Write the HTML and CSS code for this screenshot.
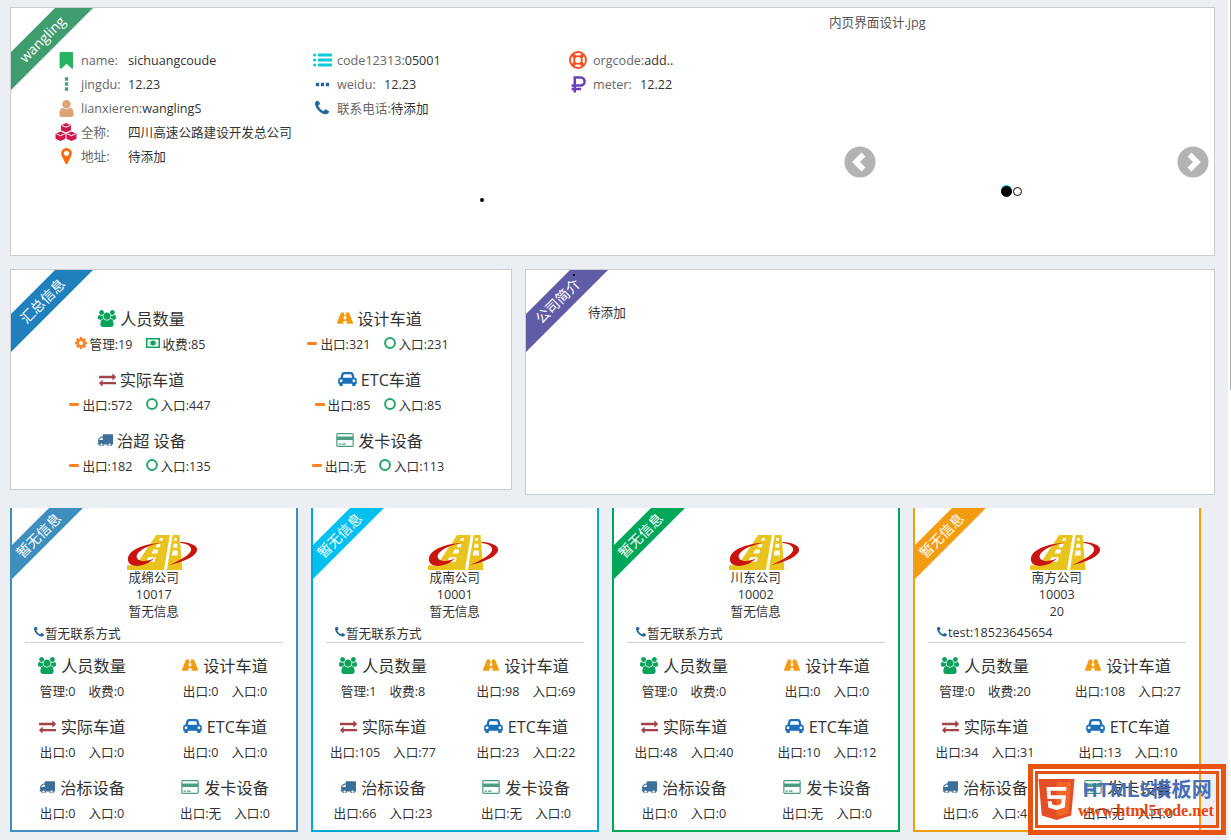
FILE: index.html
```html
<!DOCTYPE html>
<html lang="zh">
<head>
<meta charset="utf-8">
<title>内页</title>
<link rel="stylesheet" href="styles.css">
</head>
<body>
<svg class="sprite" xmlns="http://www.w3.org/2000/svg">
<symbol id="i-bookmark" viewBox="200 128 1280 1536"><path d="M1420 128q23 0 44 9 33 13 52.500 41t19.500 62v1289q0 34-19.500 62t-52.500 41q-19 8-44 8-48 0-83-32l-441-424-441 424q-36 33-83 33-23 0-44-9-33-13-52.500-41t-19.500-62v-1289q0-34 19.500-62t52.500-41q21-9 44-9h1048z"/></symbol>
<symbol id="i-users" viewBox="0 0 1920 1792"><path d="M593 896q-162 5-265 128h-134q-82 0-138-40.500t-56-118.500q0-353 124-353 6 0 43.500 21t97.500 42.500 119 21.500q67 0 133-23-5 37-5 66 0 139 81 256zm1071 637q0 120-73 189.500t-194 69.500h-874q-121 0-194-69.500t-73-189.500q0-53 3.500-103.500t14-109 26.500-108.500 43-97.500 62-81 85.500-53.500 111.500-20q10 0 43 21.500t73 48 107 48 135 21.500 135-21.500 107-48 73-48 43-21.500q61 0 111.500 20t85.500 53.500 62 81 43 97.500 26.500 108.500 14 109 3.500 103.500zm-1024-1277q0 106-75 181t-181 75-181-75-75-181 75-181 181-75 181 75 75 181zm704 384q0 159-112.500 271.500t-271.500 112.500-271.500-112.500-112.500-271.500 112.500-271.500 271.500-112.500 271.500 112.500 112.500 271.500zm576 225q0 78-56 118.500t-138 40.500h-134q-103-123-265-128 81-117 81-256 0-29-5-66 66 23 133 23 59 0 119-21.500t97.500-42.500 43.500-21q124 0 124 353zm-128-609q0 106-75 181t-181 75-181-75-75-181 75-181 181-75 181 75 75 181z"/></symbol>
<symbol id="i-user" viewBox="256 128 1280 1536"><path d="M1536 1399q0 109-62.500 187t-150.500 78h-854q-88 0-150.500-78t-62.500-187q0-85 8.500-160.500t31.500-152 58.500-131 94-89 134.500-34.500q131 128 313 128t313-128q76 0 134.500 34.500t94 89 58.500 131 31.500 152 8.500 160.500zm-256-887q0 159-112.500 271.500t-271.500 112.500-271.500-112.500-112.500-271.500 112.500-271.500 271.500-112.500 271.500 112.500 112.500 271.500z"/></symbol>
<symbol id="i-marker" viewBox="384 128 1024 1536"><path d="M1152 640q0-106-75-181t-181-75-181 75-75 181 75 181 181 75 181-75 75-181zm256 0q0 109-33 179l-364 774q-16 33-47.500 52t-67.500 19-67.500-19-46.500-52l-365-774q-33-70-33-179 0-212 150-362t362-150 362 150 150 362z"/></symbol>
<symbol id="i-phone" viewBox="192 192 1408 1408"><path d="M1600 1240q0 27-10 70.500t-21 68.500q-21 50-122 106-94 51-186 51-27 0-53-3.500t-57.500-12.500-47-14.500-55.500-20.500-49-18q-98-35-175-83-127-79-264-216t-216-264q-48-77-83-175-3-9-18-49t-20.500-55.500-14.500-47-12.500-57.500-3.500-53q0-92 51-186 56-101 106-122 25-11 68.500-21t70.500-10q14 0 21 3 18 6 53 76 11 19 30 54t35 63.500 31 53.500q3 4 17.500 25t21.500 35.500 7 28.500q0 20-28.500 50t-62 55-62 53-28.500 46q0 9 5 22.500t8.500 20.500 14 24 11.500 19q76 137 174 235t235 174q2 1 19 11.500t24 14 20.500 8.500 22.500 5q18 0 46-28.500t53-62 55-62 50-28.500q14 0 28.500 7t35.500 21.500 25 17.500q25 15 53.500 31t63.500 35 54 30q70 35 76 53 3 7 3 21z"/></symbol>
<symbol id="i-road" viewBox="50 248 1820 1296"><path d="M1111 1004v-4l-24-320q-1-13-11-22.500t-23-9.500h-186q-13 0-23 9.500t-11 22.500l-24 320v4q-1 12 8 20t21 8h244q12 0 21-8t8-20zm759 467q0 73-46 73h-704q13 0 22-9.500t8-22.500l-20-256q-1-13-11-22.500t-23-9.500h-272q-13 0-23 9.500t-11 22.500l-20 256q-1 13 8 22.500t22 9.500h-704q-46 0-46-73 0-54 26-116l417-1044q8-19 26-33t38-14h339q-13 0-23 9.500t-11 22.500l-15 192q-1 14 8 23t22 9h166q13 0 22-9t8-23l-15-192q-1-13-11-22.500t-23-9.500h339q20 0 38 14t26 33l417 1044q26 62 26 116z"/></symbol>
<symbol id="i-exchange" viewBox="0 256 1792 1280"><path d="M1792 1184v192q0 13-9.500 22.500t-22.500 9.500h-1376v192q0 13-9.500 22.500t-22.500 9.500q-12 0-24-10l-319-320q-9-9-9-22 0-14 9-23l320-320q9-9 23-9 13 0 22.500 9.500t9.500 22.500v192h1376q13 0 22.500 9.500t9.500 22.500zm0-544q0 14-9 23l-320 320q-9 9-23 9-13 0-22.500-9.500t-9.500-22.500v-192h-1376q-13 0-22.500-9.500t-9.500-22.500v-192q0-13 9.500-22.500t22.500-9.500h1376v-192q0-14 9-23t23-9q12 0 24 10l319 319q9 9 9 23z"/></symbol>
<symbol id="i-car" viewBox="0 128 2048 1536"><path d="M480 1088q0-66-47-113t-113-47-113 47-47 113 47 113 113 47 113-47 47-113zm36-320h1016l-89-357q-2-8-14-17.500t-21-9.500h-768q-9 0-21 9.500t-14 17.500zm1372 320q0-66-47-113t-113-47-113 47-47 113 47 113 113 47 113-47 47-113zm160-96v384q0 14-9 23t-23 9h-96v128q0 80-56 136t-136 56-136-56-56-136v-128h-1024v128q0 80-56 136t-136 56-136-56-56-136v-128h-96q-14 0-23-9t-9-23v-384q0-93 65.500-158.500t158.500-65.500h28l105-419q23-94 104-157.500t179-63.500h768q98 0 179 63.500t104 157.500l105 419h28q93 0 158.500 65.500t65.500 158.500z"/></symbol>
<symbol id="i-truck" viewBox="0 256 1792 1280"><path d="M640 1408q0-52-38-90t-90-38-90 38-38 90 38 90 90 38 90-38 38-90zm-384-512h384v-256h-158q-13 0-22 9l-195 195q-9 9-9 22v30zm1280 512q0-52-38-90t-90-38-90 38-38 90 38 90 90 38 90-38 38-90zm256-1088v1024q0 15-4 26.500t-13.500 18.500-16.500 11.500-23.500 6-22.500 2-25.500 0-22.500-.5q0 106-75 181t-181 75-181-75-75-181h-384q0 106-75 181t-181 75-181-75-75-181h-64q-3 0-22.500.5t-25.500 0-22.500-2-23.500-6-16.500-11.500-13.500-18.500-4-26.500q0-26 19-45t45-19v-320q0-8-.5-35t0-38 2.500-34.500 6.500-37 14-30.500 22.500-30l198-198q19-19 50.500-32t58.500-13h160v-192q0-26 19-45t45-19h1024q26 0 45 19t19 45z"/></symbol>
<symbol id="i-card" viewBox="0 128 1920 1536"><path d="M1760 128q66 0 113 47t47 113v1216q0 66-47 113t-113 47h-1600q-66 0-113-47t-47-113v-1216q0-66 47-113t113-47h1600zm-1600 128q-13 0-22.500 9.500t-9.500 22.500v224h1664v-224q0-13-9.500-22.500t-22.500-9.500h-1600zm1600 1280q13 0 22.500-9.500t9.500-22.500v-608h-1664v608q0 13 9.500 22.500t22.500 9.500h1600zm-1504-128v-128h256v128h-256zm384 0v-128h384v128h-384z"/></symbol>
<symbol id="i-cog" viewBox="128 128 1536 1536"><path d="M1152 896q0-106-75-181t-181-75-181 75-75 181 75 181 181 75 181-75 75-181zm512-109v222q0 12-8 23t-20 13l-185 28q-19 54-39 91 35 50 107 138 10 12 10 25t-9 23q-27 37-99 108t-94 71q-12 0-26-9l-138-108q-44 23-91 38-16 136-29 186-7 28-36 28h-222q-14 0-24.500-8.500t-11.500-21.500l-28-184q-49-16-90-37l-141 107q-10 9-25 9-14 0-25-11-126-114-165-168-7-10-7-23 0-12 8-23 15-21 51-66.500t54-70.500q-27-50-41-99l-183-27q-13-2-21-12.500t-8-23.500v-222q0-12 8-23t19-13l186-28q14-46 39-92-40-57-107-138-10-12-10-24 0-10 9-23 26-36 98.500-107.500t94.500-71.500q13 0 26 10l138 107q44-23 91-38 16-136 29-186 7-28 36-28h222q14 0 24.500 8.500t11.500 21.500l28 184q49 16 90 37l142-107q9-9 24-9 13 0 25 10 129 119 165 170 7 8 7 22 0 12-8 23-15 21-51 66.500t-54 70.500q26 50 41 98l183 28q13 2 21 12.500t8 23.500z"/></symbol>
<symbol id="i-vdots" viewBox="0 0 6 16"><path d="M1 0h4v4H1zM1 6h4v4H1zM1 12h4v4H1z"/></symbol>
<symbol id="i-hdots" viewBox="0 0 16 6"><path d="M0 1h4v4H0zM6 1h4v4H6zM12 1h4v4h-4z"/></symbol>
<symbol id="i-list" viewBox="0 0 19 14"><circle cx="1.600" cy="2" r="1.600"/><circle cx="1.600" cy="7" r="1.600"/><circle cx="1.600" cy="12" r="1.600"/><path d="M5 .6h14v2.800H5zM5 5.600h14v2.800H5zM5 10.600h14v2.800H5z"/></symbol>
<symbol id="i-ring" viewBox="0 0 18 18"><g fill="none" stroke="currentColor"><circle cx="9" cy="9" r="8" stroke-width="1.900"/><circle cx="9" cy="9" r="3.900" stroke-width="1.900"/><path d="M3.400 3.400l3 3M14.600 3.400l-3 3M14.600 14.600l-3-3M3.400 14.600l3-3" stroke-width="3.400"/></g></symbol>
<symbol id="i-ruble" viewBox="0 0 14 16"><path d="M3.500 15.500V1.500H9a3.500 3.500 0 0 1 0 7.500H.5M.5 12.300h9" fill="none" stroke="currentColor" stroke-width="2.400"/></symbol>
<symbol id="i-cubes" viewBox="0 0 22 18"><path d="M11 0l5 2.200v5L11 9.400 6 7.200v-5zM5.500 8.500l5 2.200v5l-5 2.300-5-2.300v-5zM16.500 8.500l5 2.200v5l-5 2.300-5-2.300v-5z"/><path d="M6.800 2.400 11 4.200l4.200-1.800M1.300 10.900l4.200 1.800 4.200-1.800M12.300 10.900l4.200 1.800 4.200-1.800" fill="none" stroke="#fff" stroke-width="1"/></symbol>
<symbol id="i-money" viewBox="0 0 14 10"><path fill-rule="evenodd" d="M0 0h14v10H0zM1.500 1.500v7h11v-7z"/><circle cx="7" cy="5" r="2.500"/><rect x="3" y="3" width="8" height="4" opacity=".25"/></symbol>
<symbol id="i-minus" viewBox="0 0 10 3"><rect width="10" height="3" rx="1.200"/></symbol>
<symbol id="i-circle" viewBox="0 0 12 12"><circle cx="6" cy="6" r="4.900" fill="none" stroke="currentColor" stroke-width="2"/></symbol>
<symbol id="i-logo" viewBox="0 0 72 36"><path fill="#e9c31e" d="M30 0h14l-6 36H6zM47 0h7l3 36H41zM0 31h12l-4 5H0z"/><path fill="#fff" d="M34 3h3l-.5 3h-3.400zM31 9h3.500l-.7 3.500h-4.300zM27 15h5l-.8 4h-6zM22 23h7.500l-1 4.500h-9zM48.800 3h2.400l.2 3h-3zM48 9h3.600l.3 4h-4.500zM47 16h5l.3 5h-6.200z"/><path fill="#c9140f" d="M36 8C16 9 0 16 1 26c1 8 17 8 27-2-8 4-17 4-18-1-1-6 12-13 26-15zM55 7c11 1 18 4 17 9-1 6-14 12-29 15 12-5 23-11 23-16 0-4-5-6-11-7z"/></symbol>
</svg>

<main class="page">
  <section class="panel panel-main">
    <div class="ribbon rb-green"><span>wangling</span></div>
    <div class="info">
      <ul class="info-col">
        <li><span class="info-ico"><svg class="ic-bookmark c-bookmark"><use href="#i-bookmark"/></svg></span><span class="lbl lbl-w">name:</span><span>sichuangcoude</span></li>
        <li><span class="info-ico"><svg class="ic-vdots c-teal"><use href="#i-vdots"/></svg></span><span class="lbl lbl-w">jingdu:</span><span>12.23</span></li>
        <li><span class="info-ico"><svg class="ic-user c-tan"><use href="#i-user"/></svg></span><span class="lbl">lianxieren:</span><span>wanglingS</span></li>
        <li><span class="info-ico"><svg class="ic-cubes c-crimson"><use href="#i-cubes"/></svg></span><span class="lbl lbl-w">全称:</span><span>四川高速公路建设开发总公司</span></li>
        <li><span class="info-ico"><svg class="ic-marker c-orange"><use href="#i-marker"/></svg></span><span class="lbl lbl-w">地址:</span><span>待添加</span></li>
      </ul>
      <ul class="info-col">
        <li><span class="info-ico"><svg class="ic-list c-cyan"><use href="#i-list"/></svg></span><span class="lbl">code12313:</span><span>05001</span></li>
        <li><span class="info-ico"><svg class="ic-hdots c-blue"><use href="#i-hdots"/></svg></span><span class="lbl lbl-w">weidu:</span><span>12.23</span></li>
        <li><span class="info-ico"><svg class="ic-phone c-blue"><use href="#i-phone"/></svg></span><span class="lbl">联系电话:</span><span>待添加</span></li>
      </ul>
      <ul class="info-col">
        <li><span class="info-ico"><svg class="ic-ring c-ring"><use href="#i-ring"/></svg></span><span class="lbl">orgcode:</span><span>add..</span></li>
        <li><span class="info-ico"><svg class="ic-ruble c-purple"><use href="#i-ruble"/></svg></span><span class="lbl lbl-w">meter:</span><span>12.22</span></li>
      </ul>
    </div>
    <div class="stray-dot"></div>
    <div class="carousel">
      <div class="carousel-title">内页界面设计.jpg</div>
      <div class="arrow arrow-prev"><svg viewBox="0 0 32 32"><circle cx="16" cy="16" r="15.500"/><path d="M19.500 8.500 12 16l7.500 7.500" class="chev"/></svg></div>
      <div class="arrow arrow-next"><svg viewBox="0 0 32 32"><circle cx="16" cy="16" r="15.500"/><path d="M12.500 8.500 20 16l-7.500 7.500" class="chev"/></svg></div>
      <div class="dots"><i class="dot dot-on"></i><i class="dot"></i></div>
    </div>
  </section>

  <div class="middle">
    <section class="panel panel-sum">
      <div class="ribbon rb-blue"><span>汇总信息</span></div>
      <div class="stats stats-sum">
        <div class="stat"><div class="stat-title"><svg class="ic-users c-users"><use href="#i-users"/></svg>人员数量</div><div class="stat-sub"><span class="sv"><svg class="ic-cog c-amber"><use href="#i-cog"/></svg>管理:19</span><span class="sv"><svg class="ic-money c-users"><use href="#i-money"/></svg>收费:85</span></div></div>
        <div class="stat"><div class="stat-title"><svg class="ic-road c-road"><use href="#i-road"/></svg>设计车道</div><div class="stat-sub"><span class="sv"><svg class="ic-minus c-amber"><use href="#i-minus"/></svg>出口:321</span><span class="sv"><svg class="ic-circle c-ok"><use href="#i-circle"/></svg>入口:231</span></div></div>
        <div class="stat"><div class="stat-title"><svg class="ic-exchange c-red"><use href="#i-exchange"/></svg>实际车道</div><div class="stat-sub"><span class="sv"><svg class="ic-minus c-amber"><use href="#i-minus"/></svg>出口:572</span><span class="sv"><svg class="ic-circle c-ok"><use href="#i-circle"/></svg>入口:447</span></div></div>
        <div class="stat"><div class="stat-title"><svg class="ic-car c-car"><use href="#i-car"/></svg>ETC车道</div><div class="stat-sub"><span class="sv"><svg class="ic-minus c-amber"><use href="#i-minus"/></svg>出口:85</span><span class="sv"><svg class="ic-circle c-ok"><use href="#i-circle"/></svg>入口:85</span></div></div>
        <div class="stat"><div class="stat-title"><svg class="ic-truck c-truck"><use href="#i-truck"/></svg>治超 设备</div><div class="stat-sub"><span class="sv"><svg class="ic-minus c-amber"><use href="#i-minus"/></svg>出口:182</span><span class="sv"><svg class="ic-circle c-ok"><use href="#i-circle"/></svg>入口:135</span></div></div>
        <div class="stat"><div class="stat-title"><svg class="ic-card c-teal"><use href="#i-card"/></svg>发卡设备</div><div class="stat-sub"><span class="sv"><svg class="ic-minus c-amber"><use href="#i-minus"/></svg>出口:无</span><span class="sv"><svg class="ic-circle c-ok"><use href="#i-circle"/></svg>入口:113</span></div></div>
      </div>
    </section>
    <section class="panel panel-intro">
      <div class="ribbon rb-purple"><span>公司简介</span></div>
      <div class="intro-dot"></div>
      <p class="intro-text">待添加</p>
    </section>
  </div>

  <div class="cards">
    <article class="card card-1">
      <div class="ribbon-sm rb-c1"><span>暂无信息</span></div>
      <svg class="logo"><use href="#i-logo"/></svg>
      <div class="org"><div>成绵公司</div><div>10017</div><div>暂无信息</div></div>
      <div class="contact"><svg class="ic-phone-sm c-blue"><use href="#i-phone"/></svg>暂无联系方式</div>
      <div class="stats stats-card">
        <div class="stat"><div class="stat-title"><svg class="ic-users c-users"><use href="#i-users"/></svg>人员数量</div><div class="stat-sub"><span>管理:0</span><span>收费:0</span></div></div>
        <div class="stat"><div class="stat-title"><svg class="ic-road c-road"><use href="#i-road"/></svg>设计车道</div><div class="stat-sub"><span>出口:0</span><span>入口:0</span></div></div>
        <div class="stat"><div class="stat-title"><svg class="ic-exchange c-red"><use href="#i-exchange"/></svg>实际车道</div><div class="stat-sub"><span>出口:0</span><span>入口:0</span></div></div>
        <div class="stat"><div class="stat-title"><svg class="ic-car c-car"><use href="#i-car"/></svg>ETC车道</div><div class="stat-sub"><span>出口:0</span><span>入口:0</span></div></div>
        <div class="stat"><div class="stat-title"><svg class="ic-truck c-truck"><use href="#i-truck"/></svg>治标设备</div><div class="stat-sub"><span>出口:0</span><span>入口:0</span></div></div>
        <div class="stat"><div class="stat-title"><svg class="ic-card c-teal"><use href="#i-card"/></svg>发卡设备</div><div class="stat-sub"><span>出口:无</span><span>入口:0</span></div></div>
      </div>
    </article>
    <article class="card card-2">
      <div class="ribbon-sm rb-c2"><span>暂无信息</span></div>
      <svg class="logo"><use href="#i-logo"/></svg>
      <div class="org"><div>成南公司</div><div>10001</div><div>暂无信息</div></div>
      <div class="contact"><svg class="ic-phone-sm c-blue"><use href="#i-phone"/></svg>暂无联系方式</div>
      <div class="stats stats-card">
        <div class="stat"><div class="stat-title"><svg class="ic-users c-users"><use href="#i-users"/></svg>人员数量</div><div class="stat-sub"><span>管理:1</span><span>收费:8</span></div></div>
        <div class="stat"><div class="stat-title"><svg class="ic-road c-road"><use href="#i-road"/></svg>设计车道</div><div class="stat-sub"><span>出口:98</span><span>入口:69</span></div></div>
        <div class="stat"><div class="stat-title"><svg class="ic-exchange c-red"><use href="#i-exchange"/></svg>实际车道</div><div class="stat-sub"><span>出口:105</span><span>入口:77</span></div></div>
        <div class="stat"><div class="stat-title"><svg class="ic-car c-car"><use href="#i-car"/></svg>ETC车道</div><div class="stat-sub"><span>出口:23</span><span>入口:22</span></div></div>
        <div class="stat"><div class="stat-title"><svg class="ic-truck c-truck"><use href="#i-truck"/></svg>治标设备</div><div class="stat-sub"><span>出口:66</span><span>入口:23</span></div></div>
        <div class="stat"><div class="stat-title"><svg class="ic-card c-teal"><use href="#i-card"/></svg>发卡设备</div><div class="stat-sub"><span>出口:无</span><span>入口:0</span></div></div>
      </div>
    </article>
    <article class="card card-3">
      <div class="ribbon-sm rb-c3"><span>暂无信息</span></div>
      <svg class="logo"><use href="#i-logo"/></svg>
      <div class="org"><div>川东公司</div><div>10002</div><div>暂无信息</div></div>
      <div class="contact"><svg class="ic-phone-sm c-blue"><use href="#i-phone"/></svg>暂无联系方式</div>
      <div class="stats stats-card">
        <div class="stat"><div class="stat-title"><svg class="ic-users c-users"><use href="#i-users"/></svg>人员数量</div><div class="stat-sub"><span>管理:0</span><span>收费:0</span></div></div>
        <div class="stat"><div class="stat-title"><svg class="ic-road c-road"><use href="#i-road"/></svg>设计车道</div><div class="stat-sub"><span>出口:0</span><span>入口:0</span></div></div>
        <div class="stat"><div class="stat-title"><svg class="ic-exchange c-red"><use href="#i-exchange"/></svg>实际车道</div><div class="stat-sub"><span>出口:48</span><span>入口:40</span></div></div>
        <div class="stat"><div class="stat-title"><svg class="ic-car c-car"><use href="#i-car"/></svg>ETC车道</div><div class="stat-sub"><span>出口:10</span><span>入口:12</span></div></div>
        <div class="stat"><div class="stat-title"><svg class="ic-truck c-truck"><use href="#i-truck"/></svg>治标设备</div><div class="stat-sub"><span>出口:0</span><span>入口:0</span></div></div>
        <div class="stat"><div class="stat-title"><svg class="ic-card c-teal"><use href="#i-card"/></svg>发卡设备</div><div class="stat-sub"><span>出口:无</span><span>入口:0</span></div></div>
      </div>
    </article>
    <article class="card card-4">
      <div class="ribbon-sm rb-c4"><span>暂无信息</span></div>
      <svg class="logo"><use href="#i-logo"/></svg>
      <div class="org"><div>南方公司</div><div>10003</div><div>20</div></div>
      <div class="contact"><svg class="ic-phone-sm c-blue"><use href="#i-phone"/></svg>test:18523645654</div>
      <div class="stats stats-card">
        <div class="stat"><div class="stat-title"><svg class="ic-users c-users"><use href="#i-users"/></svg>人员数量</div><div class="stat-sub"><span>管理:0</span><span>收费:20</span></div></div>
        <div class="stat"><div class="stat-title"><svg class="ic-road c-road"><use href="#i-road"/></svg>设计车道</div><div class="stat-sub"><span>出口:108</span><span>入口:27</span></div></div>
        <div class="stat"><div class="stat-title"><svg class="ic-exchange c-red"><use href="#i-exchange"/></svg>实际车道</div><div class="stat-sub"><span>出口:34</span><span>入口:31</span></div></div>
        <div class="stat"><div class="stat-title"><svg class="ic-car c-car"><use href="#i-car"/></svg>ETC车道</div><div class="stat-sub"><span>出口:13</span><span>入口:10</span></div></div>
        <div class="stat"><div class="stat-title"><svg class="ic-truck c-truck"><use href="#i-truck"/></svg>治标设备</div><div class="stat-sub"><span>出口:6</span><span>入口:4</span></div></div>
        <div class="stat"><div class="stat-title"><svg class="ic-card c-teal"><use href="#i-card"/></svg>发卡设备</div><div class="stat-sub"><span>出口:无</span><span>入口:0</span></div></div>
      </div>
    </article>
  </div>
</main>

<div class="scroll-edge"><div class="scroll-thumb"></div></div>

<aside class="watermark">
  <div class="wm-inner">
    <svg class="wm-shield" viewBox="0 0 36 41"><path fill="#e44d26" d="M0 0h36l-3.300 36.600L18 41 3.300 36.600z"/><path fill="#f16529" d="M18 3v34.900l11.900-3.300L32.700 3z"/><path fill="#fff" d="M8 8h20l-.3 3.800H12l.4 4.400h15l-1.100 12.200L18 31l-8.200-2.600-.6-6.200h4l.3 3.100 4.500 1.200 4.500-1.200.5-5.200H8.900z"/></svg>
    <div class="wm-text">
      <div class="wm-title">HTML5模板网</div>
      <div class="wm-url">www.html5code.net</div>
    </div>
  </div>
</aside>
</body>
</html>
```

FILE: styles.css
```css
* { box-sizing: border-box; }
html, body { margin: 0; height: 100%; overflow: hidden; }
body {
  background: #ebeef3;
  color: #333;
  font-family: "Open Sans", "Noto Sans CJK SC", sans-serif;
  font-size: 12.6px;
  position: relative;
}
.sprite { position: absolute; width: 0; height: 0; overflow: hidden; }
svg { fill: currentColor; flex: none; display: block; }

.page { padding: 7px 0 0 10px; width: 1215px; }

.panel {
  position: relative;
  background: #fff;
  border: 1px solid #c9ccd1;
}

/* Ribbons */
.ribbon, .ribbon-sm {
  position: absolute;
  top: 0;
  left: 0;
  display: flex;
  align-items: center;
  justify-content: center;
  color: #fff;
  white-space: nowrap;
}
.ribbon {
  width: 82px;
  height: 82px;
  clip-path: polygon(44px 0, 82px 0, 0 82px, 0 44px);
  font-size: 14px;
}
.ribbon span { transform: translate(-10px, -10.500px) rotate(-45deg); }
.ribbon-sm {
  width: 71px;
  height: 71px;
  clip-path: polygon(37px 0, 71px 0, 0 71px, 0 37px);
  font-size: 14px;
}
.ribbon-sm span { transform: translate(-10px, -9px) rotate(-45deg); }
.rb-green { background: #3f9c6f; font-size: 14px; }
.rb-blue { background: #1f80bd; }
.rb-purple { background: #605ca8; }
.rb-c1 { background: #3e8ebe; }
.rb-c2 { background: #00c0ef; }
.rb-c3 { background: #00a65a; }
.rb-c4 { background: #f39c12; }

/* Top panel */
.panel-main {
  height: 249px;
  display: flex;
  justify-content: space-between;
}
.info {
  display: flex;
  padding: 40px 0 0 42px;
}
.info-col {
  list-style: none;
  margin: 0;
  padding: 0;
  width: 256px;
}
.info-col li {
  display: flex;
  align-items: center;
  height: 24px;
  line-height: 17px;
  white-space: nowrap;
}
.info-ico {
  width: 26px;
  margin-right: 2px;
  display: flex;
  justify-content: center;
  align-items: center;
}
.lbl { color: #666; }
.lbl-w { width: 47px; }
.ic-bookmark { width: 14px; height: 17px; }
.ic-vdots { width: 5px; height: 14px; }
.ic-user { width: 15px; height: 17px; }
.ic-cubes { width: 22px; height: 18px; }
.ic-marker { width: 11px; height: 16px; }
.ic-list { width: 19px; height: 14px; }
.ic-hdots { width: 15px; height: 5px; }
.ic-phone { width: 14px; height: 14px; }
.ic-ring { width: 18px; height: 18px; }
.ic-ruble { width: 15px; height: 17px; }
.c-bookmark { color: #27b35f; }
.c-teal { color: #4a9d7f; }
.c-tan { color: #dda476; }
.c-crimson { color: #d0174d; }
.c-orange { color: #fb6a0e; }
.c-cyan { color: #0ccbd8; }
.c-blue { color: #25679d; }
.c-ring { color: #f4511e; }
.c-purple { color: #6a3fb5; }
.c-users { color: #0ba35c; }
.c-road { color: #f39c12; }
.c-red { color: #a4424a; }
.c-car { color: #1c6fb8; }
.c-truck { color: #3c7099; }
.c-amber { color: #f98324; }
.c-ok { color: #1fa76c; }

.stray-dot {
  position: absolute;
  left: 469px;
  top: 190px;
  width: 4px;
  height: 4px;
  border-radius: 50%;
  background: #000;
}
.carousel { position: relative; width: 385px; }
.carousel-title {
  position: absolute;
  top: 4px;
  left: 0;
  width: 98px;
  color: #555;
  white-space: nowrap;
}
.arrow {
  position: absolute;
  top: 138px;
  width: 32px;
  height: 32px;
  color: #b3b3b3;
  filter: blur(.3px);
}
.arrow-prev { left: 15px; }
.arrow-next { left: 348px; }
.chev { fill: none; stroke: #fff; stroke-width: 5.500px; }
.dots {
  position: absolute;
  top: 178px;
  left: 172px;
  display: flex;
  align-items: center;
}
.dot {
  width: 9px;
  height: 9px;
  margin-left: 1px;
  border: 1px solid #000;
  border-radius: 50%;
  background: #fff;
}
.dot-on {
  width: 11px;
  height: 11px;
  margin-left: 0;
  background: #000;
  box-shadow: 0 -1px 0 #00c0ef;
}

/* Middle */
.middle {
  display: flex;
  align-items: flex-start;
  gap: 13px;
  margin-top: 13px;
}
.panel-sum { width: 502px; height: 221px; }
.panel-intro { width: 690px; height: 226px; }
.intro-text { margin: 0; padding: 34px 0 0 62px; line-height: 17px; }
.intro-dot {
  position: absolute;
  left: 47px;
  top: 4px;
  width: 2px;
  height: 2px;
  background: #000;
}

/* Stat grid */
.stats {
  display: grid;
  grid-template-columns: 1fr 1fr;
  row-gap: 14px;
  text-align: center;
}
.stats-sum { padding: 36px 14px 0 10px; }
.stats-sum .stat-title { padding-left: 3px; }
.stat-title {
  display: flex;
  justify-content: center;
  align-items: center;
  gap: 4px;
  height: 24px;
  font-size: 16.2px;
  color: #333;
  white-space: nowrap;
}
.stat-sub {
  display: flex;
  justify-content: center;
  align-items: center;
  gap: 13px;
  height: 20px;
  margin-top: 3px;
  white-space: nowrap;
}
.sv { display: flex; align-items: center; gap: 3px; }
.ic-users { width: 18px; height: 17px; }
.ic-road { width: 16px; height: 12px; }
.ic-exchange { width: 17px; height: 13px; }
.ic-car { width: 19px; height: 14px; }
.ic-truck { width: 16px; height: 12px; }
.ic-card { width: 18px; height: 14px; }
.ic-cog { width: 12px; height: 12px; }
.ic-money { width: 14px; height: 10px; }
.ic-minus { width: 10px; height: 3px; }
.ic-circle { width: 12px; height: 12px; }

/* Cards */
.cards {
  display: flex;
  gap: 13.500px;
  margin-top: 13px;
}
.card {
  position: relative;
  width: 287.500px;
  height: 324px;
  padding-top: 27px;
  background: #fff;
  border-style: solid;
  border-width: 0 2px 2px;
}
.card-1 { border-color: #3e8ebe; }
.card-2 { border-color: #00a9d6; }
.card-3 { border-color: #00a65a; }
.card-4 { border-color: #f39c12; }
.logo { width: 72px; height: 35px; margin: 0 auto -1px; position: relative; left: 8.500px; }
.org { text-align: center; line-height: 17px; }
.contact {
  display: flex;
  align-items: center;
  gap: 1px;
  height: 19px;
  margin: 4px 13px 0;
  padding: 0 0 2px 9px;
  border-bottom: 1px solid #cfd1d4;
  white-space: nowrap;
}
.ic-phone-sm { width: 10px; height: 10px; }
.stats-card { padding-top: 10px; grid-template-columns: 140px 146px; }
.stats-card .stat-title svg { margin-right: 1px; }

/* Watermark and page edge */
.scroll-edge {
  position: absolute;
  top: 0;
  right: 0;
  bottom: 0;
  width: 3px;
  background: #fff;
}
.scroll-thumb {
  width: 1px;
  height: 390px;
  margin-left: 2px;
  background: #a8abb0;
}
.watermark {
  position: absolute;
  left: 1028px;
  top: 764px;
  width: 198px;
  height: 71px;
  padding: 2px;
  border: 5px solid #e8540f;
}
.wm-inner {
  height: 100%;
  display: flex;
  align-items: center;
  gap: 3px;
  border: 3px solid #e8540f;
}
.wm-shield { width: 37px; height: 41px; }
.wm-text { white-space: nowrap; }
.wm-title {
  padding-left: 5px;
  color: #4a6fb5;
  font-family: "Liberation Sans", "Noto Sans CJK SC", sans-serif;
  font-weight: 700;
  font-size: 20px;
  line-height: 23px;
  letter-spacing: .3px;
}
.wm-url {
  color: #e8440f;
  font-family: "Liberation Serif", serif;
  font-weight: 700;
  font-size: 16.200px;
  line-height: 19px;
}
```
